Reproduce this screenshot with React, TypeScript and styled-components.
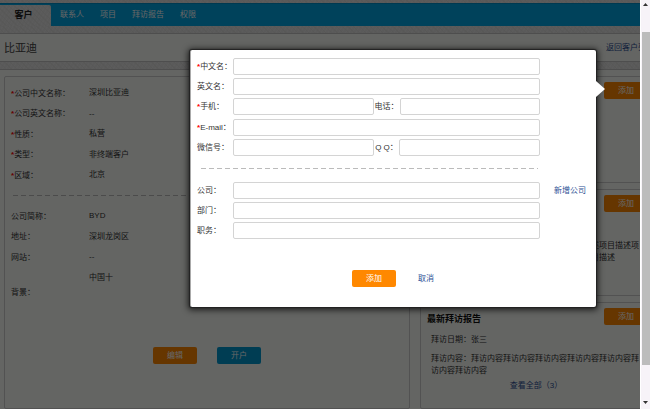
import React from "react";
import styled, { createGlobalStyle, css } from "styled-components";

const GlobalStyle = createGlobalStyle`
  *, *::before, *::after { box-sizing: border-box; }
  body {
    margin: 0;
    color: #333;
    background: #fff;
    font: 8px/12px "Liberation Sans", "Noto Sans CJK SC", sans-serif;
  }
  button, input { font: inherit; }
`;

const texture = css`
  background-color: #e2e2e0;
  background-image:
    repeating-linear-gradient(45deg, rgba(0, 0, 0, 0.03) 0 1px, transparent 1px 4px),
    repeating-linear-gradient(120deg, rgba(255, 255, 255, 0.15) 0 1px, transparent 1px 3px);
`;

const Shell = styled.div`
  display: grid;
  grid-template-columns: minmax(0, 1fr) 10px;
  height: 100vh;
`;

const Viewport = styled.div`
  position: relative;
  overflow: hidden;
`;

const Page = styled.div`
  display: flex;
  flex-direction: column;
  min-width: 660px;
  min-height: 100%;
  ${texture}
`;

const Nav = styled.nav`
  display: flex;
  align-items: center;
  gap: 16px;
  height: 23px;
  margin-top: 3px;
  background: #00a5e3;
  border-top: 1px solid #0090c8;
`;

const NavLink = styled.a`
  color: #fff;
  text-decoration: none;
`;

const ActiveTab = styled.a`
  align-self: flex-end;
  width: 51px;
  height: 21px;
  margin-right: -7px;
  padding-right: 4px;
  border-radius: 0 2px 0 0;
  color: #222;
  font-size: 9px;
  font-weight: bold;
  line-height: 20px;
  text-align: center;
  text-decoration: none;
  ${texture}
`;

const TitleBar = styled.header`
  display: flex;
  align-items: center;
  justify-content: space-between;
  height: 29px;
  margin-top: 7px;
  padding: 0 6px 0 4px;
  background: #fafcf8;
  border: solid #c4c4c4;
  border-width: 1px 0;
`;

const Title = styled.h1`
  margin: 0;
  color: #444;
  font-size: 11px;
  font-weight: normal;
  line-height: 16px;
`;

const TextLink = styled.a`
  color: #2c4f94;
  text-decoration: none;
`;

const Columns = styled.main`
  flex: 1;
  display: grid;
  grid-template-columns: minmax(0, 7fr) minmax(0, 4fr);
  gap: 10px;
  margin-top: 7px;
  padding: 6px 8px 0 4px;
  background: #fafcf8;
  border-top: 1px solid #c4c4c4;
`;

const Card = styled.section`
  border: 1px solid #ccc;
  border-radius: 2px;
`;

const DetailCard = styled(Card)`
  padding-top: 6px;
`;

const Facts = styled.dl<{ $last?: boolean }>`
  display: grid;
  grid-template-columns: 78px 1fr;
  grid-auto-rows: 21px 20px;
  margin: 0;
  padding-left: 6px;
  line-height: 20px;
  ${(p) => p.$last && "grid-template-rows: 21px 20px 21px 50px;"}
  dt, dd { margin: 0; }
  dt { align-self: center; }
`;

const Star = styled.span`
  color: #f00;
  font-weight: bold;
`;

const Dashes = styled.hr`
  height: 1px;
  margin: 0;
  border: 0;
  background: repeating-linear-gradient(90deg, #bbb 0 5px, transparent 5px 8px);
`;

const CardDashes = styled(Dashes)`
  margin: 9px 12px 10px 8px;
`;

const Button = styled.button<{ $blue?: boolean }>`
  width: 44px;
  height: 17px;
  padding: 0;
  border: 0;
  border-radius: 2px;
  background: ${(p) => (p.$blue ? "#0099d0" : "#ff8800")};
  color: #fff;
  line-height: 17px;
`;

const CardActions = styled.div`
  display: flex;
  justify-content: center;
  gap: 20px;
  margin-top: 29px;
`;

const Side = styled.div`
  display: grid;
  grid-auto-rows: 107px;
  gap: 6px;
`;

const SideHead = styled.div`
  display: flex;
  justify-content: space-between;
  padding: 5px 3px 0 6px;
`;

const AddButton = styled(Button)`
  margin-left: auto;
`;

const SideTitle = styled.h2`
  margin: 0;
  font-size: 9px;
  line-height: 22px;
  color: #111;
`;

const SideText = styled.p<{ $gap: number }>`
  margin: ${(p) => p.$gap}px 8px 0 10px;
`;

const More = styled.p`
  margin: 3px 0 0;
  text-align: center;
`;

const Overlay = styled.div`
  position: absolute;
  inset: 0;
  background: rgba(0, 0, 0, 0.6);
`;

const Dialog = styled.form`
  position: absolute;
  top: 50px;
  left: 190px;
  right: 44px;
  padding: 8px 7px 20px 6px;
  background: #fff;
  border-left: 1px solid #aaa;
  border-radius: 2px;
  box-shadow: 0 0 1px 1px #222, 0 1px 6px 2px rgba(0, 0, 0, 0.7);

  &::after {
    content: "";
    position: absolute;
    left: 100%;
    top: 31px;
    border: 8px solid transparent;
    border-left: 9px solid #fff;
    border-right: 0;
  }
`;

const Fields = styled.div`
  display: grid;
  grid-template-columns: 36px minmax(0, 1fr) 49px;
  grid-auto-rows: 20px 20px 21px;
`;

const Label = styled.label`
  line-height: 17px;
  white-space: nowrap;
`;

const Box = styled.input`
  width: 100%;
  min-width: 0;
  height: 17px;
  padding: 0 3px;
  border: 1px solid #d4d4d4;
  border-radius: 2px;
  background: #fff;
  color: #333;
  outline: 0;
`;

const Pair = styled.div`
  display: flex;
  gap: 1px;
`;

const SideLink = styled(TextLink)`
  justify-self: end;
  padding-right: 3px;
  line-height: 17px;
`;

const DialogDashes = styled(Dashes)`
  margin: 9px 51px 13px 4px;
`;

const DialogActions = styled.div`
  display: flex;
  align-items: center;
  justify-content: center;
  gap: 22px;
  margin-top: 27px;
`;

const Rail = styled.div`
  display: flex;
  flex-direction: column;
  background: #f7f3f8;
  border-left: 1px solid #fff;
`;

const RailButton = styled.button`
  display: flex;
  justify-content: center;
  height: 32px;
  padding: 3px 0 0;
  border: 0;
  background: none;
  svg { display: block; }
`;

const RailEnd = styled(RailButton)`
  height: 44px;
  align-items: flex-end;
  padding: 0 0 5px;
`;

const Thumb = styled.div`
  flex: 1;
  margin-left: 1px;
  background: #bcbcbc;
`;

const required: [string, string][] = [
  ["公司中文名称：", "深圳比亚迪"],
  ["公司英文名称：", "--"],
  ["性质：", "私营"],
  ["类型：", "非终端客户"],
  ["区域：", "北京"],
];

const optional: [string, string][] = [
  ["公司简称：", "BYD"],
  ["地址：", "深圳龙岗区"],
  ["网站：", "--"],
  ["背景：", "中国十"],
];

const projectText = `项目描述：${"项目描述".repeat(11)}`;
const visitText = `拜访内容：${"拜访内容".repeat(7)}`;

type FieldProps = { id: string; label: string; must?: boolean };

const FieldLabel = ({ id, label, must }: FieldProps) => (
  <Label htmlFor={id}>
    {must && <Star>*</Star>}
    {label}
  </Label>
);

const WideField = ({ children, ...field }: FieldProps & { children?: React.ReactNode }) => (
  <>
    <FieldLabel {...field} />
    <Box id={field.id} />
    {children ?? <span />}
  </>
);

const PairField = ({ first, second }: { first: FieldProps; second: FieldProps }) => (
  <>
    <FieldLabel {...first} />
    <Pair>
      <Box id={first.id} />
      <FieldLabel {...second} />
      <Box id={second.id} />
    </Pair>
    <span />
  </>
);

export default function App() {
  return (
    <>
      <GlobalStyle />
      <Shell>
        <Viewport>
          <Page>
            <Nav>
              <ActiveTab href="#customer">客户</ActiveTab>
              <NavLink href="#contacts">联系人</NavLink>
              <NavLink href="#projects">项目</NavLink>
              <NavLink href="#reports">拜访报告</NavLink>
              <NavLink href="#rights">权限</NavLink>
            </Nav>
            <TitleBar>
              <Title>比亚迪</Title>
              <TextLink href="#list">返回客户列表</TextLink>
            </TitleBar>
            <Columns>
              <DetailCard>
                <Facts>
                  {required.map(([name, value]) => (
                    <React.Fragment key={name}>
                      <dt><Star>*</Star>{name}</dt>
                      <dd>{value}</dd>
                    </React.Fragment>
                  ))}
                </Facts>
                <CardDashes />
                <Facts $last>
                  {optional.map(([name, value]) => (
                    <React.Fragment key={name}>
                      <dt>{name}</dt>
                      <dd>{value}</dd>
                    </React.Fragment>
                  ))}
                </Facts>
                <CardActions>
                  <Button type="button">编辑</Button>
                  <Button type="button" $blue>开户</Button>
                </CardActions>
              </DetailCard>
              <Side>
                <Card>
                  <SideHead>
                    <AddButton type="button">添加</AddButton>
                  </SideHead>
                </Card>
                <Card>
                  <SideHead>
                    <AddButton type="button">添加</AddButton>
                  </SideHead>
                  <SideText $gap={28}>{projectText}</SideText>
                </Card>
                <Card>
                  <SideHead>
                    <SideTitle>最新拜访报告</SideTitle>
                    <AddButton type="button">添加</AddButton>
                  </SideHead>
                  <SideText $gap={4}>拜访日期：张三</SideText>
                  <SideText $gap={7}>{visitText}</SideText>
                  <More>
                    <TextLink href="#all">查看全部（3）</TextLink>
                  </More>
                </Card>
              </Side>
            </Columns>
          </Page>
          <Overlay>
            <Dialog role="dialog" aria-label="添加">
              <Fields>
                <WideField id="cn" label="中文名：" must />
                <WideField id="en" label="英文名：" />
                <PairField
                  first={{ id: "mobile", label: "手机：", must: true }}
                  second={{ id: "phone", label: "电话：" }}
                />
                <WideField id="email" label="E-mail：" must />
                <PairField
                  first={{ id: "wechat", label: "微信号：" }}
                  second={{ id: "qq", label: "Q Q：" }}
                />
              </Fields>
              <DialogDashes />
              <Fields>
                <WideField id="company" label="公司：">
                  <SideLink href="#new">新增公司</SideLink>
                </WideField>
                <WideField id="dept" label="部门：" />
                <WideField id="post" label="职务：" />
              </Fields>
              <DialogActions>
                <Button type="button">添加</Button>
                <TextLink href="#cancel">取消</TextLink>
              </DialogActions>
            </Dialog>
          </Overlay>
        </Viewport>
        <Rail>
          <RailButton type="button" aria-label="向上">
            <svg width="5" height="3" viewBox="0 0 5 3"><path d="M0 3 2.5 0 5 3z" fill="#333" /></svg>
          </RailButton>
          <Thumb />
          <RailEnd type="button" aria-label="向下">
            <svg width="5" height="3" viewBox="0 0 5 3"><path d="M0 0h5L2.5 3z" fill="#333" /></svg>
          </RailEnd>
        </Rail>
      </Shell>
    </>
  );
}
